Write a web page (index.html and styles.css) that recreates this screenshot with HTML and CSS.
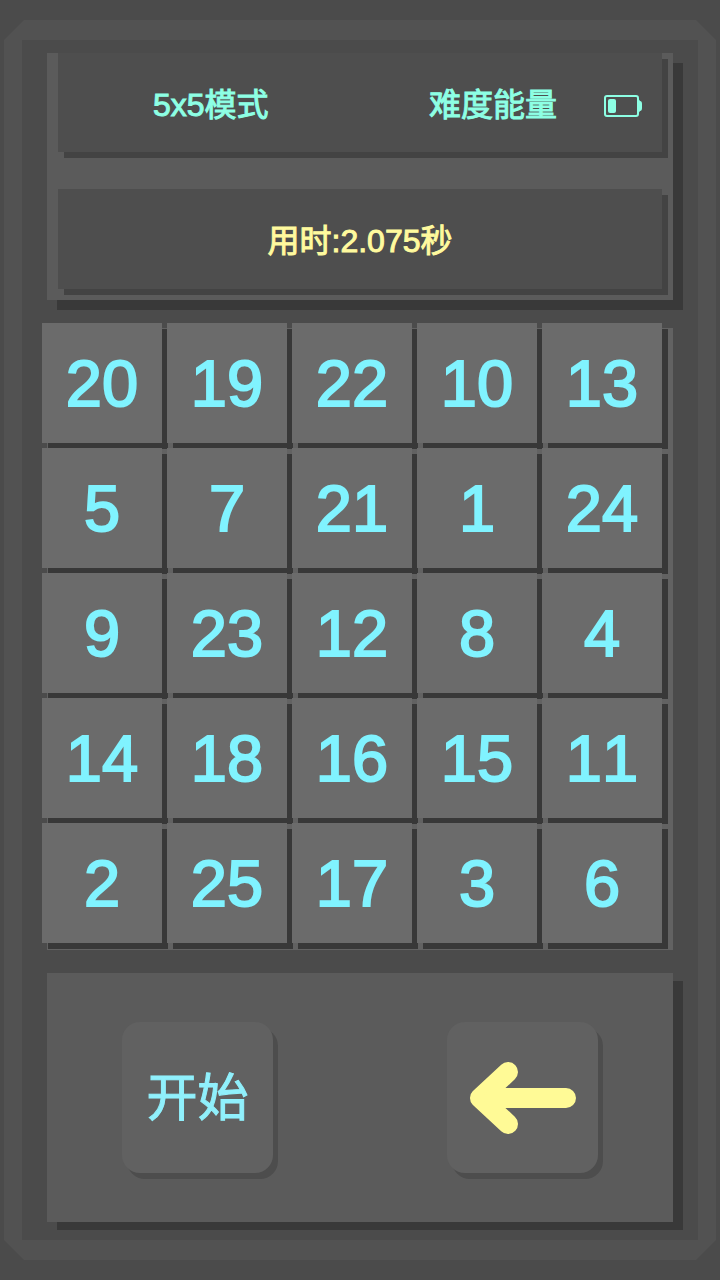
FILE: index.html
```
<!DOCTYPE html>
<html lang="zh-CN">
<head>
    <meta charset="UTF-8">
    <meta name="viewport" content="width=device-width, initial-scale=1">
    <title>5x5模式</title>
    <link rel="stylesheet" href="styles.css">
</head>
<body>

<main class="frame">
    <div class="screen">
        <section class="status">
            <div class="bar mode">
                <span>5x5模式</span>
                <div class="energy">
                    <span>难度能量</span>
                    <svg class="battery" viewBox="0 0 38 22">
                        <rect x="1" y="1" width="33" height="20" rx="2" fill="none" stroke="currentColor" stroke-width="2"/>
                        <rect x="4" y="4" width="8" height="14" rx="2" fill="currentColor"/>
                        <path d="M34 3 36 6Q38 6 38 9v4q0 3-2 3l-2 3z" fill="currentColor"/>
                    </svg>
                </div>
            </div>
            <div class="bar timer">
                <span>用时:2.075秒</span>
            </div>
        </section>

        <section class="board">
            <button>20</button>
            <button>19</button>
            <button>22</button>
            <button>10</button>
            <button>13</button>
            <button>5</button>
            <button>7</button>
            <button>21</button>
            <button>1</button>
            <button>24</button>
            <button>9</button>
            <button>23</button>
            <button>12</button>
            <button>8</button>
            <button>4</button>
            <button>14</button>
            <button>18</button>
            <button>16</button>
            <button>15</button>
            <button>11</button>
            <button>2</button>
            <button>25</button>
            <button>17</button>
            <button>3</button>
            <button>6</button>
        </section>

        <section class="controls">
            <button class="start">开始</button>
            <button class="back" aria-label="返回">
                <svg viewBox="0 0 106 74">
                    <path d="M10 37 38 11M10 37 38 63M14 37H96" fill="none" stroke="currentColor" stroke-width="20" stroke-linecap="round"/>
                    <path d="M10 37 32 18V56z" fill="currentColor"/>
                </svg>
            </button>
        </section>
    </div>
</main>

</body>
</html>
```
FILE: styles.css
```
* {
    box-sizing: border-box;
}

body {
    margin: 0;
    min-height: 100vh;
    padding: 20px 4px;
    display: flex;
    background: #4b4b4b;
    font-family: "Liberation Sans", "Noto Sans CJK SC", sans-serif;
    font-kerning: none;
}

button {
    padding: 0;
    border: none;
    font-family: inherit;
    font-kerning: inherit;
    cursor: pointer;
}

.frame {
    flex: 1;
    display: flex;
    padding: 20px 18px;
    background: #525252;
    clip-path: polygon(20px 0, calc(100% - 20px) 0, 100% 20px, 100% calc(100% - 20px), calc(100% - 20px) 100%, 20px 100%, 0 calc(100% - 20px), 0 20px);
}

.screen {
    flex: 1;
    display: flex;
    flex-direction: column;
    gap: 23px;
    padding: 13px 25px 18px;
    background: #4b4b4b;
}

.status {
    display: flex;
    flex-direction: column;
    gap: 37px;
    padding: 0 11px 11px;
    background: #5b5b5b;
    box-shadow: 10px 10px #393939;
}

.bar {
    display: flex;
    align-items: center;
    height: 99px;
    padding-top: 6px;
    background: #4e4e4e;
    box-shadow: 6px 6px #434343;
    font-size: 32px;
    -webkit-text-stroke: 1px;
}

.bar span {
    padding-bottom: 8px;
}

.mode {
    justify-content: space-between;
    padding-left: 95px;
    padding-right: 20px;
    color: #8dffe4;
}

.energy {
    display: flex;
    align-items: center;
    gap: 47px;
}

.battery {
    width: 38px;
}

.timer {
    justify-content: center;
    height: 100px;
    color: #fffa9e;
}

/* the backing plate starts 5px in, the cells stick out of it */
.board {
    display: grid;
    grid-template-columns: repeat(5, 1fr);
    gap: 5px;
    margin-left: -5px;
    padding: 0 11px 7px 0;
    background: linear-gradient(#626262, #626262) 5px 5px no-repeat;
}

.board button {
    aspect-ratio: 1;
    background: #6b6b6b;
    box-shadow: 6px 6px #383838;
    color: #80f3ff;
    font-size: 65px;
    -webkit-text-stroke: 2px;
}

.controls {
    flex: 1;
    display: flex;
    justify-content: space-between;
    align-items: center;
    padding: 0 75px;
    background: #5b5b5b;
    box-shadow: 10px 8px #393939;
}

.controls button {
    display: flex;
    justify-content: center;
    align-items: center;
    width: 151px;
    height: 151px;
    border-radius: 18px;
    background: #616161;
    box-shadow: 5px 6px #4d4d4d;
}

.controls .start {
    padding-bottom: 8px;
    color: #90f0fc;
    font-size: 51px;
    -webkit-text-stroke: 1px;
}

.back {
    color: #fffa96;
}

.back svg {
    width: 106px;
}
```
